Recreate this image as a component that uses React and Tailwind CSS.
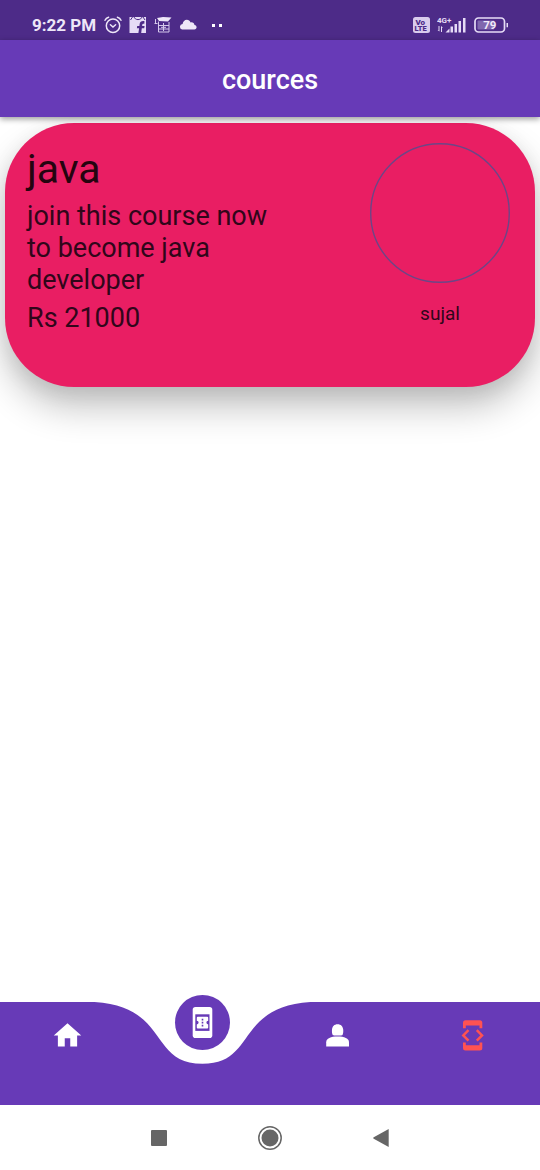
import { MdHome } from "react-icons/md";

function AlarmIcon() {
  return (
    <svg viewBox="0 0 18 18" className="size-[18px]" fill="none" stroke="currentColor" strokeWidth="1.5" strokeLinecap="round" aria-hidden="true">
      <circle cx="9" cy="9.8" r="6.7" />
      <path d="M6.4 8.8 9 11l2.6-2.2M1 4.2Q2 2 4.6 1.2M17 4.2Q16 2 13.4 1.2" />
    </svg>
  );
}

function ShopIcon() {
  return (
    <svg viewBox="0 0 18 18" className="size-[18px]" aria-hidden="true">
      <path d="M.5 1H17v16H.5z" fill="#e6dcf6" />
      <path d="M5 .6c.5 4 7.500 4 8 0M1.500 4l2-3M16 4l-2-3" fill="none" stroke="#4d2b88" strokeWidth="1" />
      <path d="M15.500 5.200c-3-.5-4.600.7-4.900 3L10.400 10H8.200l-.3 2.300h2.200L9.400 17h2.800l.6-4.700h2.400l.4-2.300h-2.500l.2-1.300c.1-.9.7-1.200 2-1z" fill="#4d2b88" />
    </svg>
  );
}

function GraduateIcon() {
  return (
    <svg viewBox="0 0 18 18" className="size-[18px]" fill="none" stroke="#d5c8eb" strokeWidth="1" aria-hidden="true">
      <path d="M3 2 9 1l8.500.5L14 5.500 5 5z" fill="#eee7f8" stroke="none" />
      <path d="M1.500 3v4M.5 7.500h3M4.500 5.500v10.500H15V6M5 9.500h10M5 13h10M9.500 7v8M7 11.300h5" />
    </svg>
  );
}

function CloudIcon() {
  return (
    <svg viewBox="0 0 18 18" className="size-[18px]" fill="#eee7f8" aria-hidden="true">
      <path d="M3 13.500a2.800 2.800 0 0 1 .6-5.500C4 5.400 5.700 3.800 7.800 3.800c1.800 0 3.100 1 3.700 2.600 2.400-.4 3.800.9 4 2.600 1.300.2 2.100 1.100 2.100 2.300s-.9 2.200-2.200 2.200z" />
    </svg>
  );
}

function VolteIcon() {
  return (
    <svg viewBox="0 0 17 16" className="h-4 w-[17px]" aria-hidden="true">
      <rect width="17" height="16" rx="2.500" fill="#d9cced" />
      <text x="2.500" y="7.500" fill="#4d2b88" fontFamily="Roboto, sans-serif" fontWeight="900" fontSize="8">Vo</text>
      <text x="1.500" y="14.400" fill="#4d2b88" fontFamily="Roboto, sans-serif" fontWeight="900" fontSize="7.500">LTE</text>
    </svg>
  );
}

function SignalIcon() {
  return (
    <svg viewBox="0 0 30 18" className="h-[18px] w-[30px]" fill="#e6dcf6" aria-hidden="true">
      <text x="0" y="6.500" fontFamily="Roboto, sans-serif" fontWeight="700" fontSize="8">4G+</text>
      <path d="M1.500 10h1v5.500l-2-1.500h1zM4 16v-6l2 1.800H5V16zM8.500 16.500l4-4v4zM13.500 10.500H16v6h-2.500zM17.500 8H20v8.500h-2.500zM21.500 5H24v11.500h-2.500zM26 2h2.500v14.500H26z" />
    </svg>
  );
}

function BatteryIcon() {
  return (
    <svg viewBox="0 0 35 18" className="h-[18px] w-[35px]" aria-hidden="true">
      <rect x="1" y="2" width="29.500" height="14" rx="3.500" fill="none" stroke="#e6dcf6" strokeWidth="1.700" />
      <path d="M4.500 4.500H20v9H4.500a1 1 0 0 1-1-1v-7a1 1 0 0 1 1-1z" fill="#8067ae" />
      <path d="M32.500 7h1.500v4.200h-1.500z" fill="#e6dcf6" />
      <text x="15.800" y="13" textAnchor="middle" fill="#f1eafa" fontFamily="Roboto, sans-serif" fontWeight="700" fontSize="11.500">79</text>
    </svg>
  );
}

function StatusBar() {
  return (
    <div className="flex h-10 items-center justify-between bg-[#4d2b88] px-8 pt-[10px] text-[#eee7f8]">
      <div className="flex items-center gap-[7px]">
        <span className="mr-px text-[17px] leading-5 font-bold">9:22 PM</span>
        <AlarmIcon />
        <ShopIcon />
        <GraduateIcon />
        <CloudIcon />
        <span className="ml-2 flex gap-1">
          <span className="size-[3px] bg-white" />
          <span className="size-[3px] bg-white" />
        </span>
      </div>
      <div className="-mr-px flex items-center gap-[7px]">
        <VolteIcon />
        <SignalIcon />
        <BatteryIcon />
      </div>
    </div>
  );
}

function CourseCard() {
  return (
    <article className="mx-[5px] mt-[6px] flex min-h-[264px] justify-between rounded-[69px] bg-[#e91e63] pt-5 pr-[25px] pb-12 pl-[22px] shadow-[0_20px_36px_0px_rgba(0,0,0,0.24),0_6px_20px_rgba(0,0,0,0.08)]">
      <div className="w-[270px] pt-[2px] text-[#30061a]">
        <h2 className="text-[41px] leading-[48px] text-[#25040f]">java</h2>
        <p className="mt-[7px] text-[27px] leading-8">join this course now to become java developer</p>
        <p className="mt-[6px] text-[27px] leading-8">Rs 21000</p>
      </div>
      <div className="flex w-[140px] flex-col items-center">
        <div className="flex size-[140px]">
          <svg viewBox="0 0 140 140" className="size-full" aria-hidden="true">
            <circle cx="70" cy="70" r="69.300" fill="none" stroke="#6c4687" strokeWidth="1.400" />
          </svg>
        </div>
        <p className="mt-5 text-[19px] leading-[22px] text-[#30061a]">sujal</p>
      </div>
    </article>
  );
}

function TicketPhoneIcon() {
  return (
    <svg viewBox="0 0 33 33" className="size-[33px]" aria-hidden="true">
      <rect x="6.700" y="1" width="19.600" height="31" rx="2.800" fill="currentColor" />
      <path d="M9.300 8.300h14.200v16.600H9.300z" fill="#673ab7" />
      <path d="M11.800 10.700h9.400q1 0 1 1v3.100a1.800 1.800 0 0 0 0 3.600v3.100q0 1-1 1h-9.400q-1 0-1-1v-3.100a1.800 1.800 0 0 0 0-3.600v-3.100q0-1 1-1z" fill="currentColor" />
      <path d="M15.700 12.800h1.600v1.600h-1.600zM15.700 15.800h1.600v1.600h-1.600zM15.700 18.800h1.600v1.600h-1.600z" fill="#673ab7" />
    </svg>
  );
}

function PersonIcon() {
  return (
    <svg viewBox="0 0 33 33" className="size-[33px]" fill="currentColor" aria-hidden="true">
      <path d="M16.600 5.200c3.400 0 5.300 2.200 5.600 5.400.2 2.200 0 3.800-.5 5-.3.700-.7.900-1.400.9h-7.400c-.7 0-1.100-.2-1.400-.9-.5-1.200-.7-2.800-.5-5 .3-3.200 2.200-5.400 5.600-5.400z" />
      <path d="M5.200 27.500v-4.200c0-3.900 4.600-5.700 11.400-5.700S28 19.400 28 23.300v4.200z" />
    </svg>
  );
}

function DeveloperIcon() {
  return (
    <svg viewBox="0 0 33 33" className="size-[33px]" fill="currentColor" aria-hidden="true">
      <path d="M7 9.300V3.700q0-2.500 2.500-2.500h14.300q2.500 0 2.500 2.500v5.600h-2.800V6.500H9.800v2.800zM7 23.500v5.600q0 2.500 2.500 2.500h14.300q2.500 0 2.500-2.500v-5.600h-2.800v2.800H9.800v-2.800z" />
      <path d="M12.500 11.200 7.300 16.400l5.200 5.200M20.800 11.200l5.200 5.200-5.200 5.200" fill="none" stroke="currentColor" strokeWidth="2.500" />
    </svg>
  );
}

function BottomNav() {
  return (
    <nav className="relative h-[103px]">
      <svg className="absolute inset-0 size-full" viewBox="0 0 540 103" preserveAspectRatio="none" aria-hidden="true">
        <path
          d="M0 0H94.500C170.100 5.150 148.500 61.800 202.500 61.800C256.500 61.800 234.900 5.150 310.500 0H540V103H0Z"
          fill="#673ab7"
        />
      </svg>
      <div className="relative grid h-[67px] grid-cols-4 place-items-center text-white">
        <button type="button" aria-label="Home">
          <MdHome className="size-[33px]" />
        </button>
        <button type="button" aria-label="Courses" aria-current="page" className="-mt-[26px] flex size-[55px] items-center justify-center rounded-full bg-[#673ab7]">
          <TicketPhoneIcon />
        </button>
        <button type="button" aria-label="Profile">
          <PersonIcon />
        </button>
        <button type="button" aria-label="Developer" className="text-[#ff5252]">
          <DeveloperIcon />
        </button>
      </div>
    </nav>
  );
}

function SystemNav() {
  return (
    <div className="grid h-[65px] grid-cols-[repeat(3,111px)] place-content-center place-items-center text-[#666]">
      <button type="button" aria-label="Recent apps">
        <span className="block size-4 rounded-[1px] bg-current" />
      </button>
      <button type="button" aria-label="Home screen">
        <svg viewBox="0 0 24 24" className="size-6">
          <circle cx="12" cy="12" r="11.200" fill="none" stroke="currentColor" strokeWidth="1.500" />
          <circle cx="12" cy="12" r="8.500" fill="currentColor" />
        </svg>
      </button>
      <button type="button" aria-label="Back">
        <svg viewBox="0 0 16 18" className="h-[18px] w-4">
          <path d="M15.700 0v18L.3 9.600V8.500z" fill="currentColor" />
        </svg>
      </button>
    </div>
  );
}

export default function App() {
  return (
    <div className="flex min-h-screen flex-col bg-white font-[Roboto,sans-serif]">
      <StatusBar />
      <header className="relative flex h-[77px] items-center justify-center bg-[#673ab7] pt-[2px] shadow-[0_2px_6px_rgba(0,0,0,0.4)]">
        <h1 className="text-[27px] leading-8 font-medium text-white">cources</h1>
      </header>
      <main className="flex-1">
        <CourseCard />
      </main>
      <BottomNav />
      <SystemNav />
    </div>
  );
}
